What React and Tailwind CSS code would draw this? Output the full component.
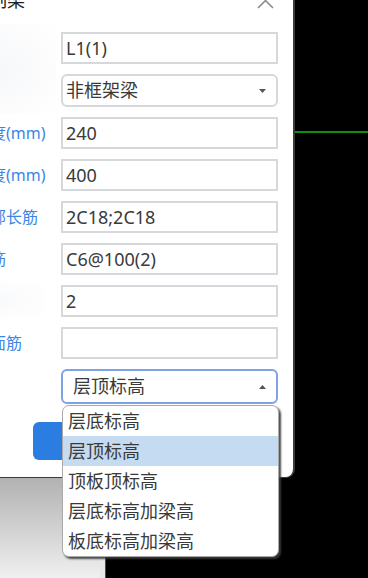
export default function App() {
  const rows = [
    { label: "", value: "L1(1)", type: "input" },
    { label: "", value: "非框架梁", type: "select" },
    { label: "宽度(mm)", value: "240", type: "input" },
    { label: "高度(mm)", value: "400", type: "input" },
    { label: "上部长筋", value: "2C18;2C18", type: "input" },
    { label: "箍筋", value: "C6@100(2)", type: "input" },
    { label: "", value: "2", type: "input" },
    { label: "侧面筋", value: "", type: "input" },
  ];
  const items = ["层底标高", "层顶标高", "顶板顶标高", "层底标高加梁高", "板底标高加梁高"];
  return (
    <div className="w-[368px] h-[578px] overflow-hidden bg-black flex flex-col relative font-['Noto_Sans','Noto_Sans_CJK_SC',sans-serif]">
      <div className="flex h-[478px] shrink-0">
        <div className="w-[295px] shrink-0 bg-white rounded-br-[9px] border-r-2 border-b border-[#3b3b3b] overflow-hidden flex flex-col relative">
          <div className="h-[32px] -mt-[16px] flex items-center justify-between pr-[19px] -ml-[29px]">
            <span className="text-[18px] text-[#222] whitespace-nowrap">绘制梁</span>
            <svg width="17" height="17" viewBox="0 0 17 17" className="text-[#8a8a8a]">
              <path d="M1 1 L16 16 M16 1 L1 16" stroke="currentColor" strokeWidth="1.6" fill="none" />
            </svg>
          </div>
          <div className="flex flex-col gap-[10px] pt-[16px]">
            {rows.map((r, i) => (
              <div key={i} className="flex items-center -ml-[26px]">
                <div className="w-[87px] shrink-0 whitespace-nowrap text-[16px] text-[#3a86e6]">
                  {r.label}
                </div>
                {r.type === "input" ? (
                  <div className="w-[217px] h-[32px] border-2 border-[#d6d8dc] flex items-center pl-[3px] text-[18px] text-[#3a3a3a] whitespace-nowrap">
                    {r.value}
                  </div>
                ) : (
                  <div className="w-[217px] h-[33px] border-2 border-[#d6d8dc] rounded-[6px] flex items-center justify-between pl-[3px] pr-[10px] text-[18px] text-[#3a3a3a]">
                    <span>{r.value}</span>
                    <svg width="7" height="4" viewBox="0 0 7 4"><path d="M0 0 H7 L3.5 4 Z" fill="#555" /></svg>
                  </div>
                )}
              </div>
            ))}
            <div className="flex items-center">
              <div className="w-[61px] shrink-0" />
              <div className="w-[217px] h-[35px] border-2 border-[#7fa2e4] rounded-[6px] flex items-center justify-between pl-[10px] pr-[10px] text-[18px] text-[#3a3a3a]">
                <span>层顶标高</span>
                <svg width="7" height="4" viewBox="0 0 7 4"><path d="M0 4 H7 L3.5 0 Z" fill="#555" /></svg>
              </div>
            </div>
          </div>
          <div className="flex pl-[33px] mt-[18px] gap-3">
            <div className="w-[100px] h-[38px] rounded-[6px] bg-[#2b7de1]" />
          </div>
          <div className="absolute left-0 top-[24px] w-[56px] h-[90px] bg-[radial-gradient(ellipse_at_left,rgba(238,240,244,0.5),rgba(255,255,255,0))]" />
          <div className="absolute left-0 top-[282px] w-[44px] h-[36px] bg-[radial-gradient(ellipse_at_left,rgba(238,240,244,0.35),rgba(255,255,255,0))]" />
        </div>
        <div className="flex-1 flex flex-col">
          <div className="mt-[131px] h-[2px] bg-[#0c8f0c]" />
        </div>
      </div>
      <div className="flex flex-1">
        <div className="w-[100px] bg-gradient-to-b from-[#b2b2b2] to-[#f0f0f0]" />
        <div className="w-[6px] bg-[#e8e8e8] border-r border-[#4a4a4a]" />
        <div className="flex-1 bg-black" />
      </div>
      <div className="absolute left-[62px] top-[405px] w-[217px] bg-white border border-[#a9a9a9] rounded-[7px] shadow-[2px_2px_2px_rgba(60,60,60,0.9)] overflow-hidden">
        {items.map((t, i) => (
          <div key={i} className={`h-[30px] leading-[30px] pl-[5px] text-[18px] text-[#3a3a3a] whitespace-nowrap ${i === 1 ? "bg-[#c5dbf1]" : ""}`}>
            {t}
          </div>
        ))}
      </div>
    </div>
  );
}
